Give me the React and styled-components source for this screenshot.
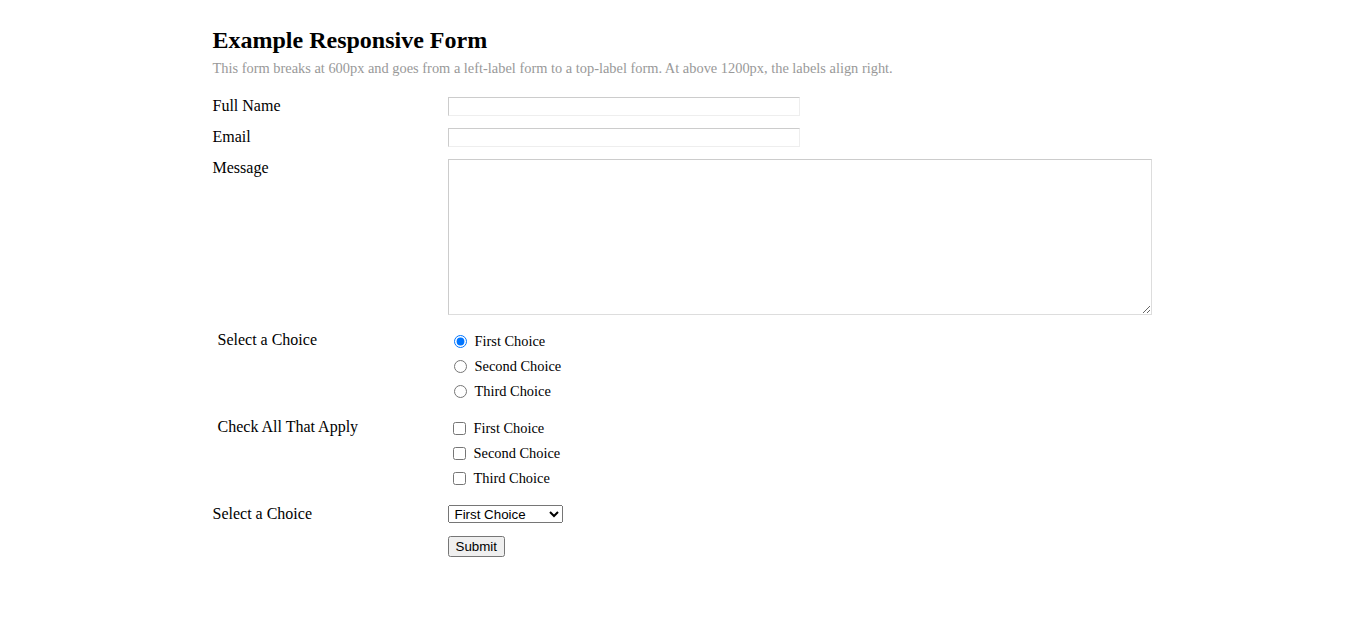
import React from 'react'
import styled, { createGlobalStyle } from 'styled-components'

const GlobalStyle = createGlobalStyle`
  body {
    margin: 0;
    background: #fff;
    font-family: "Liberation Serif", "Times New Roman", serif;
    color: #000;
  }
`

const StyledPage = styled.div`
  width: 940px;
  margin: 0 auto;
  padding-top: 27px;
`

const StyledHeading = styled.h2`
  margin: 0;
  font-size: 24px;
  font-weight: 700;
`

const StyledIntro = styled.p`
  margin: 6px 0 20px 0;
  font-size: 14.4px;
  color: #999;
`

const StyledRow = styled.div`
  display: flex;
  align-items: flex-start;
  margin-bottom: ${props => props.gap || 12}px;
  padding-left: ${props => props.inset || 0}px;
`

const StyledLabel = styled.label`
  width: ${props => 235 - (props.inset || 0)}px;
  flex-shrink: 0;
  font-size: 16px;
  line-height: 18px;
  padding-top: ${props => props.top || 0}px;
`

const StyledInput = styled.input`
  box-sizing: border-box;
  width: 352px;
  height: 19px;
  margin: 0;
  border: 1px solid;
  border-color: #ccc #eee #eee #ccc;
  padding: 1px 2px;
`

const StyledTextarea = styled.textarea`
  box-sizing: border-box;
  width: 704px;
  height: 156px;
  margin: 0;
  border: 1px solid;
  border-color: #ccc #ddd #ddd #ccc;
`

const StyledOptions = styled.div`
  display: flex;
  flex-direction: column;
  padding-left: 1px;
`

const StyledOption = styled.label`
  display: flex;
  align-items: center;
  height: 25px;
  font-size: 14.4px;

  & input {
    margin: ${props => props.kind === 'radio' ? '0 8px 0 5px' : '0 8px 0 4px'};
    width: 13px;
    height: 13px;
  }
`

const StyledSelect = styled.select`
  width: 115px;
  height: 18px;
  margin: 0;
  font-family: "Liberation Sans", Arial, sans-serif;
  font-size: 13.33px;
  padding: 0 2px;
`

const StyledButton = styled.button`
  margin: 0;
  height: 21px;
  padding: 1px 6px;
  font-family: "Liberation Sans", Arial, sans-serif;
  font-size: 13.33px;
`

const choices = ['First Choice', 'Second Choice', 'Third Choice']

const App = () => {
  return (
    <StyledPage>
      <GlobalStyle />
      <StyledHeading>Example Responsive Form</StyledHeading>
      <StyledIntro>
        This form breaks at 600px and goes from a left-label form to a top-label form. At above 1200px, the labels align right.
      </StyledIntro>
      <form onSubmit={e => e.preventDefault()}>
        <StyledRow>
          <StyledLabel htmlFor="name">Full Name</StyledLabel>
          <StyledInput id="name" type="text" />
        </StyledRow>
        <StyledRow>
          <StyledLabel htmlFor="email">Email</StyledLabel>
          <StyledInput id="email" type="email" />
        </StyledRow>
        <StyledRow gap={14}>
          <StyledLabel htmlFor="message">Message</StyledLabel>
          <StyledTextarea id="message" />
        </StyledRow>
        <StyledRow inset={5} gap={12}>
          <StyledLabel inset={5} top={2}>Select a Choice</StyledLabel>
          <StyledOptions>
            {choices.map((choice, i) => (
              <StyledOption kind="radio" key={choice}>
                <input type="radio" name="radio-choice" defaultChecked={i === 0} />
                {choice}
              </StyledOption>
            ))}
          </StyledOptions>
        </StyledRow>
        <StyledRow inset={5} gap={14}>
          <StyledLabel inset={5} top={2}>Check All That Apply</StyledLabel>
          <StyledOptions>
            {choices.map(choice => (
              <StyledOption kind="checkbox" key={choice}>
                <input type="checkbox" />
                {choice}
              </StyledOption>
            ))}
          </StyledOptions>
        </StyledRow>
        <StyledRow gap={13}>
          <StyledLabel htmlFor="select">Select a Choice</StyledLabel>
          <StyledSelect id="select">
            {choices.map(choice => (
              <option key={choice}>{choice}</option>
            ))}
          </StyledSelect>
        </StyledRow>
        <StyledRow>
          <StyledLabel />
          <StyledButton type="submit">Submit</StyledButton>
        </StyledRow>
      </form>
    </StyledPage>
  )
}

export default App
